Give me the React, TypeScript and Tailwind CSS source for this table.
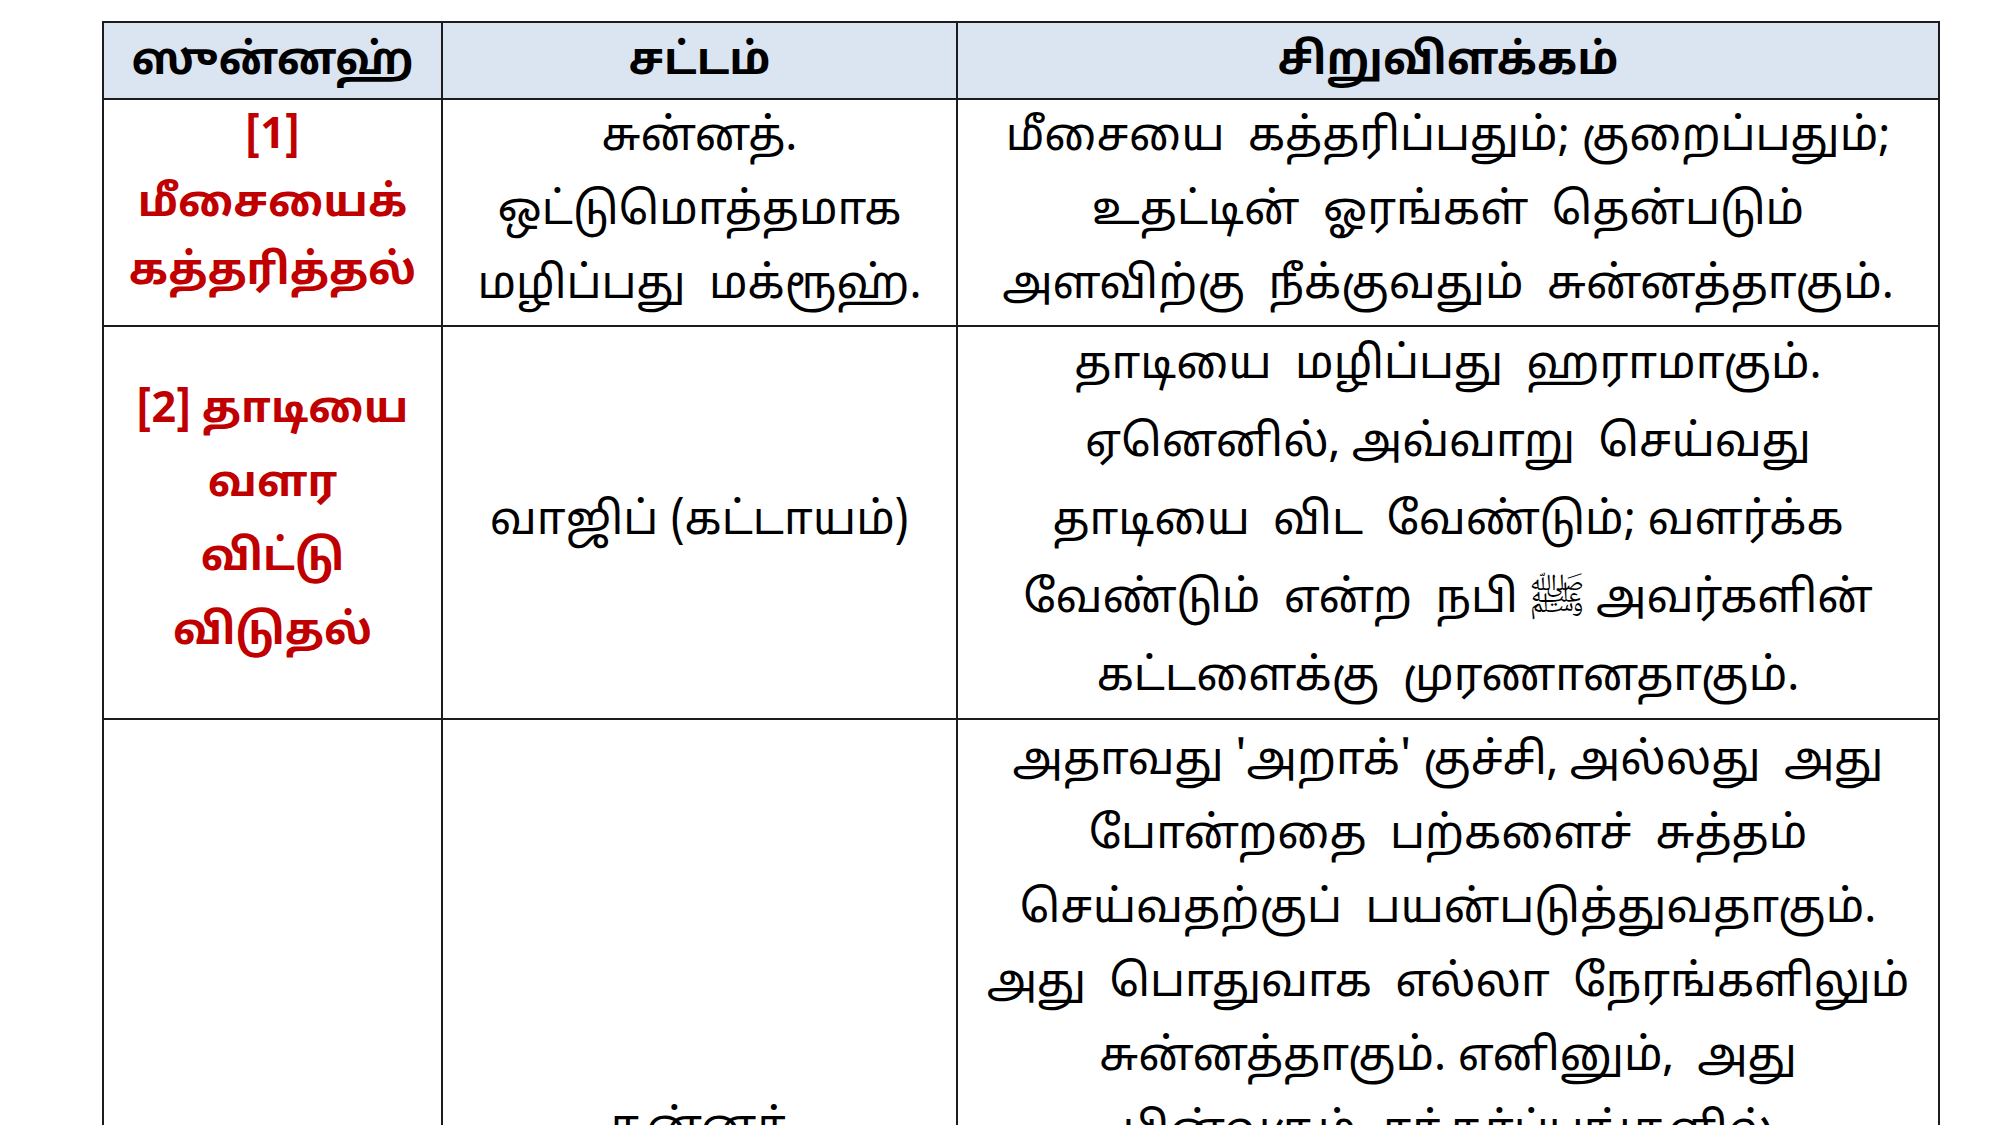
import React from "react";

const FONT = {
  fontFamily:
    '"Latha", "Noto Sans Tamil", "Noto Serif Tamil", "Lohit Tamil", "Noto Sans", "Noto Naskh Arabic", "Noto Sans Arabic", "DejaVu Sans", sans-serif',
};

function Lines({ lines, className }: { lines: string[]; className?: string }) {
  return (
    <div className={className}>
      {lines.map((l, i) => (
        <div key={i} className="whitespace-pre">
          {l}
        </div>
      ))}
    </div>
  );
}

export default function App() {
  const cell = "border-2 border-[#1c1c1c] text-center";
  return (
    <div className="min-h-screen bg-white pl-[102px] pt-[21px] text-black" style={FONT}>
      <table className="table-fixed border-collapse w-[1836px]">
        <colgroup>
          <col className="w-[339px]" />
          <col className="w-[515px]" />
          <col className="w-[982px]" />
        </colgroup>
        <thead>
          <tr className="h-[77px] bg-[#dbe5f1] text-[44px] font-bold leading-[60px]">
            <th className={`${cell} pt-[4px]`}>ஸுன்னஹ்</th>
            <th className={`${cell} pt-[4px]`}>சட்டம்</th>
            <th className={`${cell} pt-[4px]`}>சிறுவிளக்கம்</th>
          </tr>
        </thead>
        <tbody className="text-[45px]">
          <tr className="h-[227px]">
            <td className={`${cell} align-top pt-[4px]`}>
              <Lines
                className="text-[43px] font-bold text-[#c00000] leading-[68px]"
                lines={["[1]", "மீசையைக்", "கத்தரித்தல்"]}
              />
            </td>
            <td className={`${cell} align-top pt-[2px]`}>
              <Lines
                className="leading-[74px]"
                lines={["சுன்னத்.", "ஒட்டுமொத்தமாக", "மழிப்பது  மக்ரூஹ்."]}
              />
            </td>
            <td className={`${cell} align-top pt-[2px]`}>
              <Lines
                className="leading-[74px]"
                lines={[
                  "மீசையை  கத்தரிப்பதும்; குறைப்பதும்;",
                  "உதட்டின்  ஓரங்கள்  தென்படும்",
                  "அளவிற்கு  நீக்குவதும்  சுன்னத்தாகும்.",
                ]}
              />
            </td>
          </tr>
          <tr className="h-[393px]">
            <td className={`${cell} align-middle`}>
              <Lines
                className="text-[43px] font-bold text-[#c00000] leading-[74px]"
                lines={["[2] தாடியை", "வளர", "விட்டு", "விடுதல்"]}
              />
            </td>
            <td className={`${cell} align-middle`}>
              <div className="leading-[74px]">வாஜிப் (கட்டாயம்)</div>
            </td>
            <td className={`${cell} align-middle`}>
              <Lines
                className="leading-[78px]"
                lines={[
                  "தாடியை  மழிப்பது  ஹராமாகும்.",
                  "ஏனெனில், அவ்வாறு  செய்வது",
                  "தாடியை  விட  வேண்டும்; வளர்க்க",
                  "வேண்டும்  என்ற  நபி ﷺ அவர்களின்",
                  "கட்டளைக்கு  முரணானதாகும்.",
                ]}
              />
            </td>
          </tr>
          <tr>
            <td className={`${cell} align-bottom pb-6`}>
              <Lines
                className="text-[43px] font-bold text-[#c00000] leading-[74px]"
                lines={["[3] மிஸ்வாக்", "பயன்படுத்தல்"]}
              />
            </td>
            <td className={`${cell} align-middle`}>
              <div className="leading-[74px]">சுன்னத்</div>
            </td>
            <td className={`${cell} align-top pt-[6px]`}>
              <Lines
                className="leading-[74px]"
                lines={[
                  "அதாவது 'அறாக்' குச்சி, அல்லது  அது",
                  "போன்றதை  பற்களைச்  சுத்தம்",
                  "செய்வதற்குப்  பயன்படுத்துவதாகும்.",
                  "அது  பொதுவாக  எல்லா  நேரங்களிலும்",
                  "சுன்னத்தாகும். எனினும்,  அது",
                  "பின்வரும்  சந்தர்ப்பங்களில்",
                  "மிகவும்  வலியுறுத்தப்பட்ட",
                  "சுன்னத்தாகும்: உளூச்  செய்யும்",
                  "போது, தொழுகைக்குச்  செல்லும்",
                  "போது, தூக்கத்திலிருந்து",
                  "எழும்  போது.",
                ]}
              />
            </td>
          </tr>
        </tbody>
      </table>
    </div>
  );
}
